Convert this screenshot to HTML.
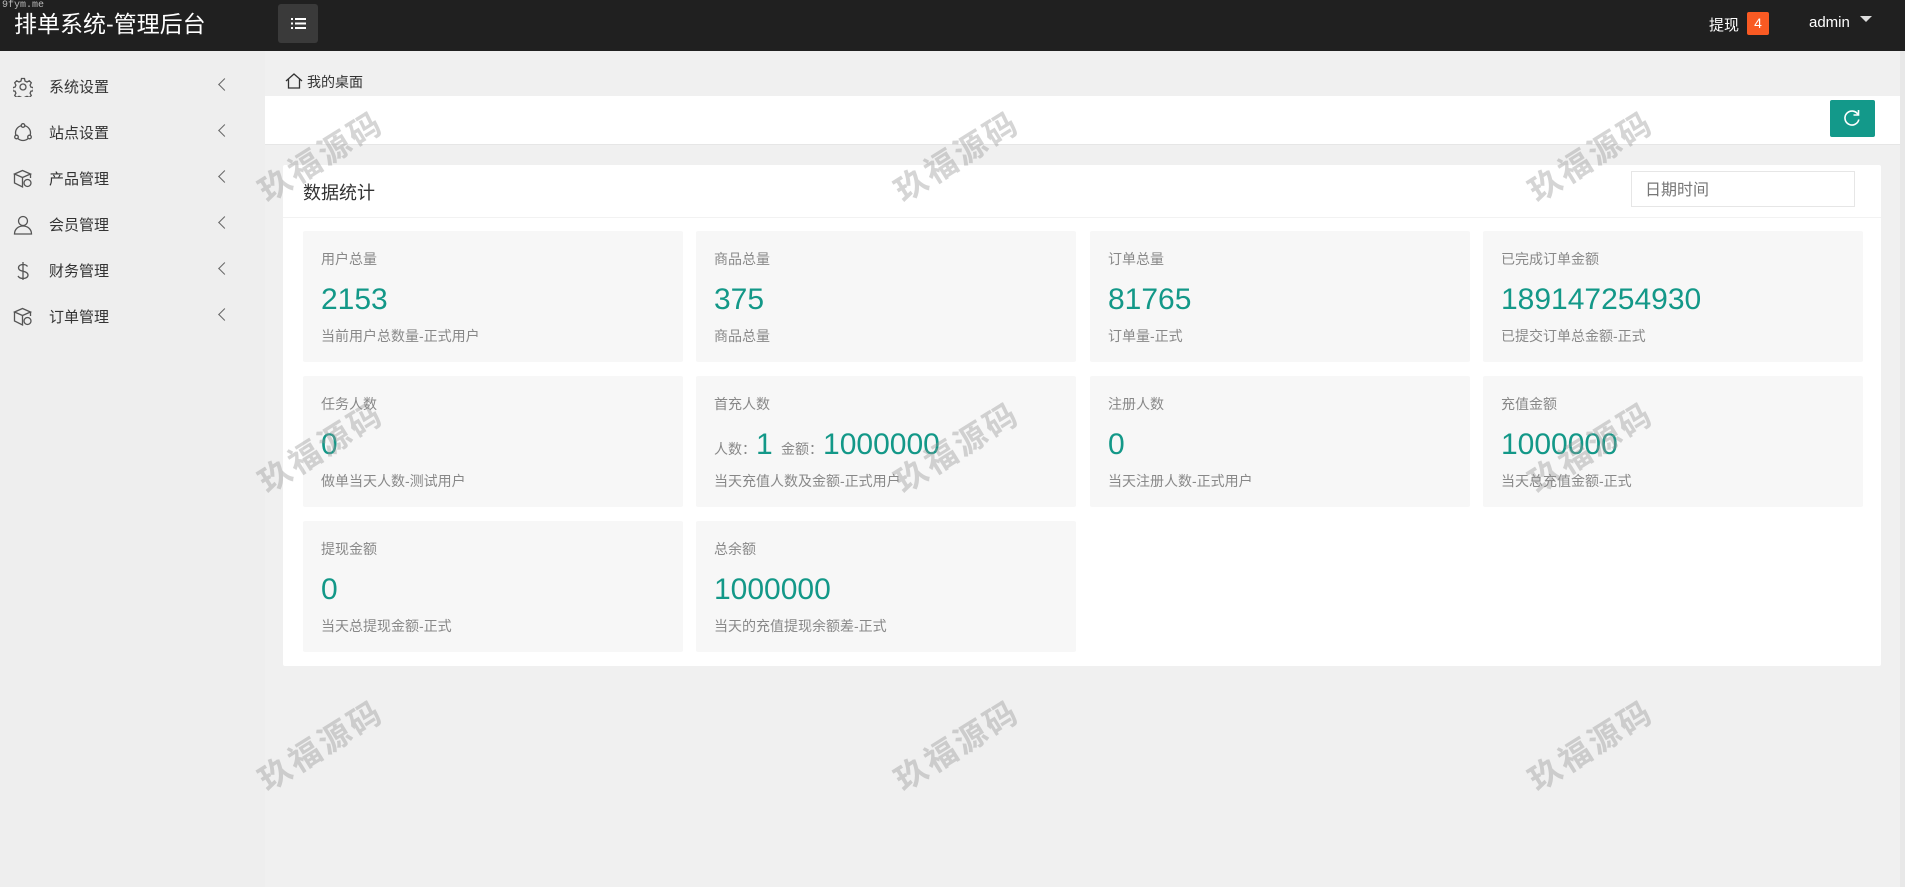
<!DOCTYPE html>
<html><head><meta charset="utf-8">
<style>
*{margin:0;padding:0;box-sizing:border-box}
body{width:1905px;height:887px;overflow:hidden;background:#f0f0f0;font-family:"Liberation Sans","Noto Sans CJK SC",sans-serif;position:relative;color:#333}
.hd{position:absolute;left:0;top:0;width:1905px;height:51px;background:#202020}
.title{position:absolute;left:14px;top:9px;color:#fff;font-size:23px;line-height:30px}
.wm0{position:absolute;left:2px;top:0;color:#bbb;font-size:10px;font-family:"Liberation Mono",monospace}
.mbtn{position:absolute;left:278px;top:4px;width:40px;height:39px;background:#3a3a3a;border-radius:3px}
.tx{position:absolute;left:1709px;top:14px;color:#fff;font-size:15px}
.badge{position:absolute;left:1747px;top:12px;width:22px;height:23px;background:#f95a23;color:#fff;font-size:14px;text-align:center;line-height:23px;border-radius:2px}
.adm{position:absolute;left:1809px;top:14px;color:#fff;font-size:15px}
.caret{position:absolute;left:1860px;top:16px;border-left:6px solid transparent;border-right:6px solid transparent;border-top:6px solid #ddd}
.sb{position:absolute;left:0;top:51px;width:265px;height:836px;background:#eeeeee}
.it{position:absolute;left:0;width:265px;height:46px}
.it svg{position:absolute;left:13px;top:14px}
.it span{position:absolute;left:49px;top:13px;font-size:15px;color:#333}
.it i{position:absolute;left:220px;top:17px;width:9px;height:9px;border-left:1.5px solid #666;border-bottom:1.5px solid #666;transform:rotate(45deg)}
.bc{position:absolute;left:285px;top:72px;font-size:14px;color:#333}
.bar{position:absolute;left:265px;top:96px;width:1636px;height:49px;background:#fff;border-bottom:1px solid #e6e6e6}
.rf{position:absolute;left:1830px;top:100px;width:45px;height:37px;background:#13998a;border-radius:2px}
.card{position:absolute;left:283px;top:165px;width:1598px;height:501px;background:#fff;border-radius:2px}
.ct{position:absolute;left:20px;top:14px;font-size:18px;color:#333}
.cl{position:absolute;left:0;top:52px;width:100%;height:1px;background:#f2f2f2}
.date{position:absolute;left:1348px;top:6px;width:224px;height:36px;border:1px solid #e6e6e6;font-size:16px;color:#777;padding:4px 13px}
.bx{position:absolute;width:380px;height:131px;background:#f7f7f7;border-radius:2px}
.bx .l{position:absolute;left:18px;top:18px;font-size:14px;color:#888}
.bx .n{position:absolute;left:18px;top:51px;font-size:30px;color:#139888;line-height:36px}
.bx .n small{font-size:14px;color:#888}
.bx .d{position:absolute;left:18px;top:95px;font-size:14px;color:#888}
.wm{position:absolute;font-size:32px;font-weight:bold;color:rgba(150,150,150,0.4);transform:rotate(-32deg);white-space:nowrap;letter-spacing:3px;font-family:"Noto Sans CJK SC",sans-serif}
.scr{position:absolute;left:1900px;top:51px;width:5px;height:836px;background:#e8e8e8}
</style></head><body>
<div class="hd">
<div class="wm0">9fym.me</div>
<div class="title">排单系统-管理后台</div>
<div class="mbtn"><svg width="40" height="39"><g fill="#fff"><rect x="13" y="14" width="2" height="2"/><rect x="17" y="14" width="11" height="2"/><rect x="13" y="18.5" width="2" height="2"/><rect x="17" y="18.5" width="11" height="2"/><rect x="13" y="23" width="2" height="2"/><rect x="17" y="23" width="11" height="2"/></g></svg></div>
<div class="tx">提现</div><div class="badge">4</div>
<div class="adm">admin</div><div class="caret"></div>
</div>
<div class="sb">
<div class="it" style="top:12px"><svg width="20" height="20" fill="none" stroke="#555" stroke-width="1.3"><circle cx="10" cy="10" r="3"/><path d="M8.5 1.5h3l.5 2.5 2 1 2.3-1.2 2 2-1.2 2.3.8 2 2.5.6v3l-2.5.5-.8 2 1.2 2.3-2 2-2.3-1.2-2 .8-.5 2.5h-3l-.5-2.5-2-.8-2.3 1.2-2-2 1.2-2.3-.8-2-2.5-.5v-3l2.5-.6.8-2-1.2-2.3 2-2 2.3 1.2 2-1z"/></svg><span>系统设置</span><i></i></div>
<div class="it" style="top:58px"><svg width="20" height="20" fill="none" stroke="#555" stroke-width="1.3"><circle cx="10" cy="10" r="7.5"/><circle cx="10" cy="2.5" r="1.8" fill="#eee"/><circle cx="3.5" cy="14" r="1.8" fill="#eee"/><circle cx="16.5" cy="14" r="1.8" fill="#eee"/></svg><span>站点设置</span><i></i></div>
<div class="it" style="top:104px"><svg width="20" height="20" fill="none" stroke="#555" stroke-width="1.3"><path d="M1.5 5l8-3.5 8 3.5-8 3.5zM1.5 5v9l8 4V8.5M17.5 5v4"/><circle cx="14.5" cy="14" r="3.5"/></svg><span>产品管理</span><i></i></div>
<div class="it" style="top:150px"><svg width="20" height="20" fill="none" stroke="#555" stroke-width="1.3"><circle cx="10" cy="6" r="4.5"/><path d="M1.5 19c0-5 4-8 8.5-8s8.5 3 8.5 8z"/></svg><span>会员管理</span><i></i></div>
<div class="it" style="top:196px"><svg width="20" height="20" fill="none" stroke="#555" stroke-width="1.3"><path d="M10 1v18M14.5 5.5c-1-1.5-2.5-2-4.5-2-2.5 0-4.5 1.3-4.5 3.3 0 4.5 9.5 2.5 9.5 7.3 0 2-2 3.4-5 3.4-2.2 0-4-.8-5-2.5"/></svg><span>财务管理</span><i></i></div>
<div class="it" style="top:242px"><svg width="20" height="20" fill="none" stroke="#555" stroke-width="1.3"><path d="M1.5 5l8-3.5 8 3.5-8 3.5zM1.5 5v9l8 4V8.5M17.5 5v4"/><circle cx="14.5" cy="14" r="3.5"/></svg><span>订单管理</span><i></i></div>
</div>
<div class="bc"><svg width="18" height="16" style="vertical-align:-2px;margin-right:4px" fill="none" stroke="#333" stroke-width="1.3"><path d="M1 8L9 1l8 7M3.5 6v9h11V6"/></svg>我的桌面</div>
<div class="bar"></div>
<div class="rf"><svg width="45" height="37" fill="none" stroke="#fff" stroke-width="1.6"><path d="M28 14.5a7 7 0 1 0 .8 5"/><path d="M28.5 10v5h-5"/></svg></div>
<div class="card">
<div class="ct">数据统计</div><div class="cl"></div>
<div class="date">日期时间</div>
<div class="bx" style="left:20px;top:66px"><div class="l">用户总量</div><div class="n">2153</div><div class="d">当前用户总数量-正式用户</div></div>
<div class="bx" style="left:413px;top:66px"><div class="l">商品总量</div><div class="n">375</div><div class="d">商品总量</div></div>
<div class="bx" style="left:807px;top:66px"><div class="l">订单总量</div><div class="n">81765</div><div class="d">订单量-正式</div></div>
<div class="bx" style="left:1200px;top:66px"><div class="l">已完成订单金额</div><div class="n">189147254930</div><div class="d">已提交订单总金额-正式</div></div>
<div class="bx" style="left:20px;top:211px"><div class="l">任务人数</div><div class="n">0</div><div class="d">做单当天人数-测试用户</div></div>
<div class="bx" style="left:413px;top:211px"><div class="l">首充人数</div><div class="n"><small>人数：</small>1 <small>金额：</small>1000000</div><div class="d">当天充值人数及金额-正式用户</div></div>
<div class="bx" style="left:807px;top:211px"><div class="l">注册人数</div><div class="n">0</div><div class="d">当天注册人数-正式用户</div></div>
<div class="bx" style="left:1200px;top:211px"><div class="l">充值金额</div><div class="n">1000000</div><div class="d">当天总充值金额-正式</div></div>
<div class="bx" style="left:20px;top:356px"><div class="l">提现金额</div><div class="n">0</div><div class="d">当天总提现金额-正式</div></div>
<div class="bx" style="left:413px;top:356px"><div class="l">总余额</div><div class="n">1000000</div><div class="d">当天的充值提现余额差-正式</div></div>
</div>
<div class="scr"></div>
<div class="wm" style="left:250px;top:132px">玖福源码</div>
<div class="wm" style="left:886px;top:132px">玖福源码</div>
<div class="wm" style="left:1520px;top:132px">玖福源码</div>
<div class="wm" style="left:250px;top:423px">玖福源码</div>
<div class="wm" style="left:886px;top:423px">玖福源码</div>
<div class="wm" style="left:1520px;top:423px">玖福源码</div>
<div class="wm" style="left:250px;top:721px">玖福源码</div>
<div class="wm" style="left:886px;top:721px">玖福源码</div>
<div class="wm" style="left:1520px;top:721px">玖福源码</div>
</body></html>
